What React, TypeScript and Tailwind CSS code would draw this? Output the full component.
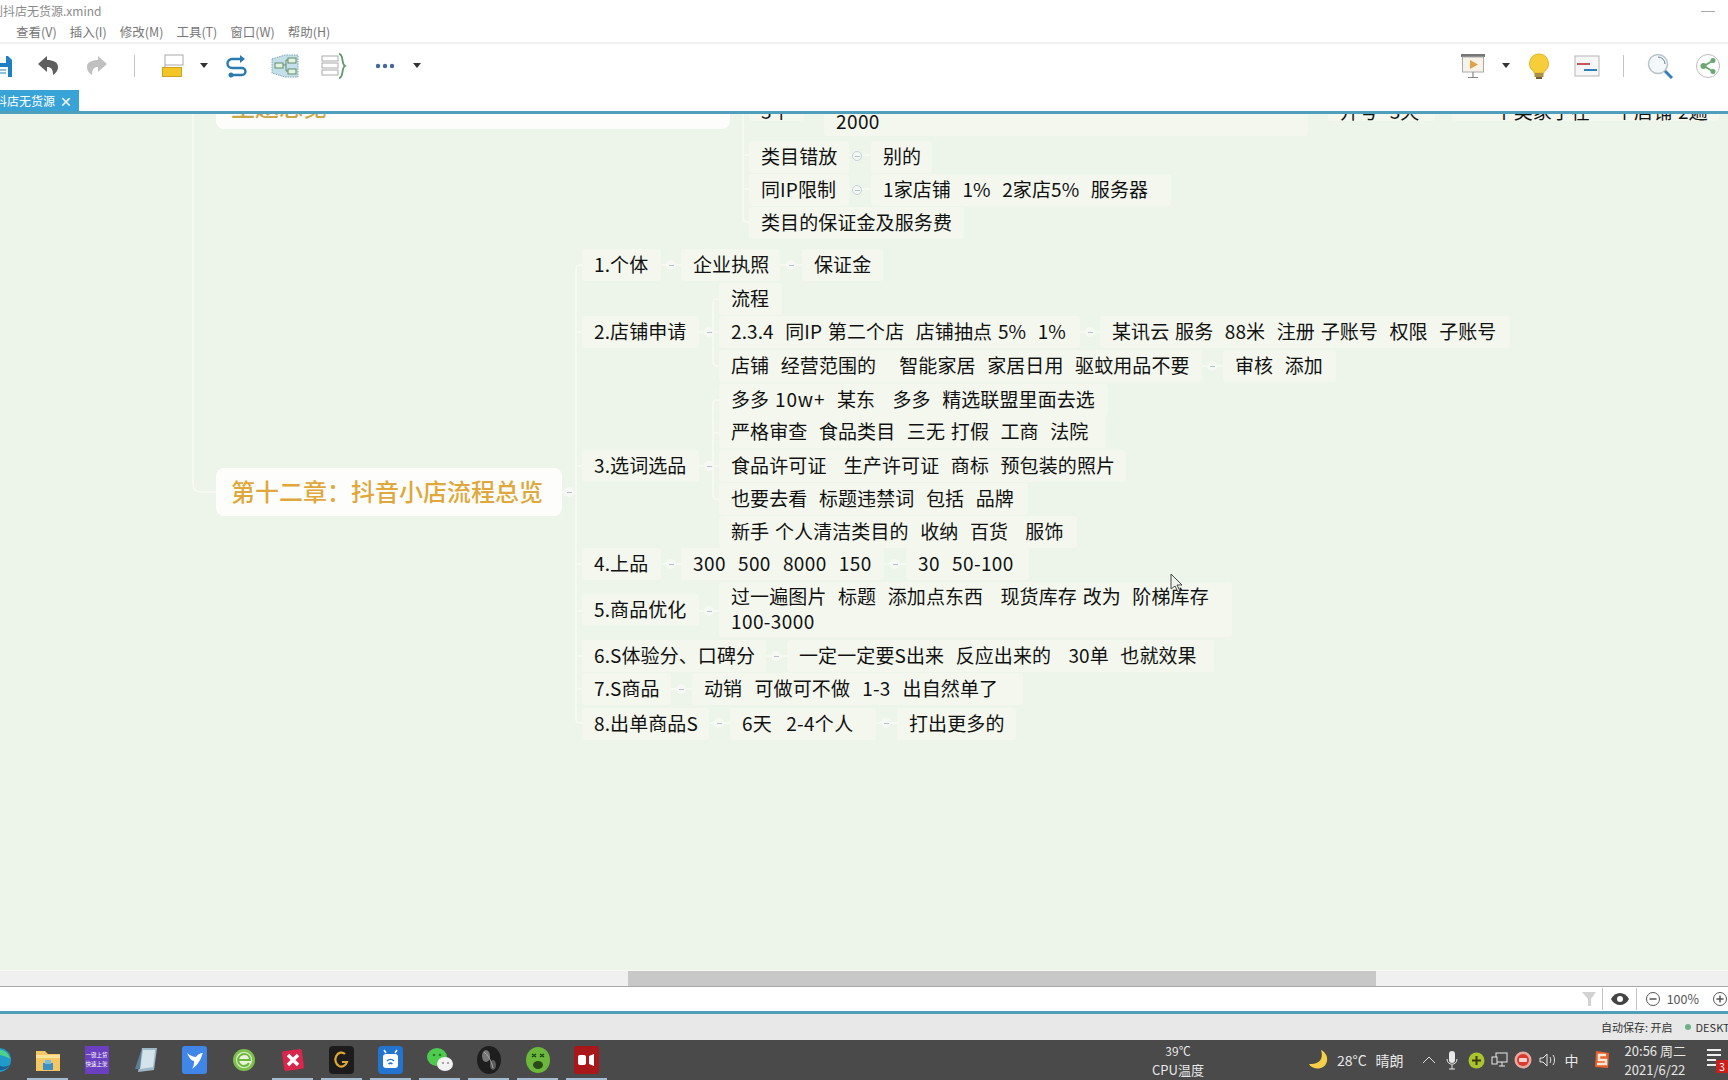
import React from "react";

const FONT = "font-['Noto_Sans_CJK_SC','Noto_Sans',sans-serif]";

function N({ c, children }: { c: string; children: React.ReactNode }) {
  return (
    <div className={"absolute flex items-center h-[32px] pl-[12px] pb-[3px] rounded-[3px] bg-[#f3f7ee] text-[19px] leading-[25px] text-[#111] whitespace-pre tracking-[0.1px] [word-spacing:1.4px] " + c}>
      {children}
    </div>
  );
}

function T({ c, ring = false }: { c: string; ring?: boolean }) {
  return (
    <div className={"absolute w-[10px] h-[10px] rounded-full bg-[#f6f9f3] flex items-center justify-center " + (ring ? "border border-[#c3d2dc] " : "") + c}>
      <div className="w-[5px] h-[1px] bg-[#b4c2cc] shrink-0" />
    </div>
  );
}

function Caret() {
  return <div className="w-0 h-0 border-l-[4px] border-r-[4px] border-t-[5px] border-l-transparent border-r-transparent border-t-[#333]" />;
}

function Sep({ c = "" }: { c?: string }) {
  return <div className={"w-[1px] h-[22px] bg-[#c4c4c4] " + c} />;
}

function Toolbar() {
  return (
    <div className="h-[48px] flex items-center border-t-2 border-[#f0f0f0] bg-white pr-[8px] pb-[3px]">
      <svg width="22" height="24" viewBox="0 0 22 24" className="-ml-[9px]">
        <path d="M1 2h16l4 4v17H1z" fill="#1c80c4" />
        <rect x="5" y="2" width="10" height="7" fill="#fff" />
        <rect x="5" y="13" width="12" height="10" fill="#fff" />
        <path d="M7 16h8M7 19h8" stroke="#1c80c4" />
      </svg>
      <svg width="24" height="24" viewBox="0 0 24 24" className="ml-[23px]">
        <path d="M11 2 2 10l9 8v-5c4 0 6 2 6 8 4-3 5-5 5-8 0-5-5-7-11-7z" fill="#5f5f5f" />
      </svg>
      <svg width="24" height="24" viewBox="0 0 24 24" className="ml-[25px]">
        <path d="M13 2l9 8-9 8v-5c-4 0-6 2-6 8-4-3-5-5-5-8 0-5 5-7 11-7z" fill="#c0c0c0" />
      </svg>
      <Sep c="ml-[25px]" />
      <svg width="24" height="24" viewBox="0 0 24 24" className="ml-[25px]">
        <rect x="5" y="1" width="18" height="10" fill="#fff" stroke="#aaa" />
        <rect x="2.5" y="13.5" width="19" height="9" fill="#f3c525" stroke="#c9a227" />
        <path d="M5 11v2" stroke="#aaa" />
      </svg>
      <div className="ml-[16px]"><Caret /></div>
      <svg width="24" height="24" viewBox="0 0 24 24" fill="none" className="ml-[17px]">
        <path d="M18 5H7a4.500 4.500 0 0 0 0 9h10a3.500 3.500 0 0 1 0 7H8" stroke="#2b7bb0" strokeWidth="2.400" />
        <path d="M15 1l5 4-5 4z" fill="#2b7bb0" />
        <circle cx="6" cy="21" r="2.500" fill="#2b7bb0" />
      </svg>
      <svg width="28" height="24" viewBox="0 0 28 24" className="ml-[22px]">
        <path d="M1 5 14 1h13v22H14L1 19z" fill="#c5dfea" stroke="#7aa3b8" strokeDasharray="1.500 1" />
        <rect x="4" y="9" width="8" height="5" fill="#e4f0e0" stroke="#5e8f6a" />
        <rect x="17" y="4" width="8" height="5" fill="#e4f0e0" stroke="#5e8f6a" />
        <rect x="17" y="15" width="8" height="5" fill="#e4f0e0" stroke="#5e8f6a" />
        <path d="M12 11h3V6h2M15 11v6h2" fill="none" stroke="#5e8f6a" />
      </svg>
      <svg width="26" height="26" viewBox="0 0 26 26" fill="none" className="ml-[22px]">
        <rect x="1" y="3" width="16" height="5" stroke="#aaa" />
        <rect x="1" y="10" width="16" height="5" stroke="#aaa" />
        <rect x="1" y="17" width="16" height="5" stroke="#aaa" />
        <path d="M18 1c5 0 2 10 6 12-4 2-1 12-6 12" stroke="#5c9a6a" strokeWidth="1.800" />
      </svg>
      <svg width="20" height="6" viewBox="0 0 20 6" className="ml-[28px]">
        <circle cx="3" cy="3" r="2.200" fill="#43699a" />
        <circle cx="10" cy="3" r="2.200" fill="#43699a" />
        <circle cx="17" cy="3" r="2.200" fill="#43699a" />
      </svg>
      <div className="ml-[18px]"><Caret /></div>

      <svg width="26" height="26" viewBox="0 0 26 26" className="ml-auto">
        <rect x="1" y="1" width="24" height="3" fill="#777" />
        <rect x="2.500" y="4" width="21" height="15" fill="#f8f3e8" stroke="#aaa" />
        <path d="M10 7l8 4.500-8 4.500z" fill="#dfa14a" />
        <path d="M13 19v5M8 24.500h10" stroke="#888" strokeWidth="1.200" />
      </svg>
      <div className="ml-[16px]"><Caret /></div>
      <svg width="22" height="26" viewBox="0 0 22 26" className="ml-[18px]">
        <path d="M11 1a9.500 9.500 0 0 0-5 17.500V20h10v-1.500A9.500 9.500 0 0 0 11 1z" fill="#f6cd3a" stroke="#e6b422" />
        <rect x="6.500" y="20" width="9" height="4" fill="#a98f4a" />
        <rect x="8" y="24" width="6" height="2" fill="#6f6030" />
      </svg>
      <svg width="26" height="22" viewBox="0 0 26 22" fill="none" className="ml-[24px]">
        <rect x="1" y="1" width="24" height="20" fill="#f7f7f7" stroke="#b5b5b5" />
        <path d="M3 9h13" stroke="#c2595a" strokeWidth="2" />
        <path d="M10 15h13" stroke="#2f7fb8" strokeWidth="2" />
      </svg>
      <Sep c="ml-[23px]" />
      <svg width="26" height="26" viewBox="0 0 26 26" fill="none" className="ml-[23px]">
        <circle cx="11" cy="11" r="9.500" fill="#f4f8fb" stroke="#b9c3cc" strokeWidth="1.500" />
        <path d="M11 4a7 7 0 0 1 7 7" stroke="#5f7fa0" />
        <path d="M18 18l7 7" stroke="#2f7fb8" strokeWidth="3" />
      </svg>
      <svg width="24" height="24" viewBox="0 0 24 24" fill="none" className="ml-[23px]">
        <circle cx="12" cy="12" r="11.500" fill="#fff" stroke="#bbb" />
        <path d="M17 6.500 8 12l9 5.500" stroke="#6aa86f" strokeWidth="1.800" />
        <circle cx="7.500" cy="12" r="3" fill="#6aa86f" />
        <circle cx="17" cy="6.500" r="2.500" fill="#6aa86f" />
        <circle cx="17" cy="17.500" r="2.500" fill="#6aa86f" />
      </svg>
    </div>
  );
}

function MindMap() {
  return (
    <div className="relative flex-1 overflow-hidden bg-[#edf4e9]">
      <svg width="1728" height="856" viewBox="0 0 1728 856" fill="none" stroke="#f7faf4" strokeWidth="1.500" className="absolute left-0 top-0">
        <path d="M193 0V370Q193 378 201 378H216" />
        <path d="M562 378H576" />
        <path d="M582 151H580Q576 151 576 155V605Q576 609 580 609H582" />
        <path d="M576 218H582M576 352H582M576 450H582M576 497H582M576 542H582M576 575H582" />
        <path d="M699 218H719M699 352H713M699 497H719M661 151H681M780 151H802M661 450H681M884 450H906M766 542H787M671 575H692M709 609H730M876 609H897M1080 218H1100M1202 252H1223" />
        <path d="M719 185H717Q713 185 713 189V248Q713 252 717 252H719" />
        <path d="M719 286H717Q713 286 713 290V381Q713 385 717 385H719M713 319H719M713 352H719" />
        <path d="M743 0V104Q743 108 747 108H749M743 41H749M743 75H749M849 41H871M849 75H871" />
      </svg>

      <div className={"absolute left-[216px] top-[-40px] w-[514px] h-[55px] rounded-[8px] bg-[#fdfefb] pl-[15px] pb-[8px] flex items-end text-[24px] leading-[30px] font-medium text-[#c9a64a] " + FONT}>主题总览</div>
      <div className={"absolute left-[216px] top-[354px] w-[346px] h-[48px] rounded-[8px] bg-[#fdfefb] pl-[15px] pb-[2px] flex items-center text-[24px] font-medium text-[#e0a73c] whitespace-pre " + FONT}>{"第十二章\uFF1A抖音小店流程总览"}</div>

      <div className={FONT}>
        <N c="left-[749px] top-[-15px] w-[55px] !h-[22px] !pb-0">3个</N>
        <N c="left-[824px] top-[-41px] w-[484px] !h-[63px] !items-end !pb-[3px] tracking-[0.4px]">2000</N>
        <N c="left-[1328px] top-[-15px] w-[107px] !h-[22px] !pb-0">开号  3天</N>
        <N c="left-[1452px] top-[-15px] w-[267px] !h-[22px] !pb-0">  一个类家手在 一个店铺 2遍</N>

        <N c="left-[749px] top-[27px] w-[100px]">类目错放</N>
        <N c="left-[871px] top-[27px] w-[61px]">别的</N>
        <N c="left-[749px] top-[60px] w-[100px]">同IP限制</N>
        <N c="left-[871px] top-[60px] w-[300px]">1家店铺  1%  2家店5%  服务器</N>
        <N c="left-[749px] top-[93px] w-[215px]">类目的保证金及服务费</N>

        <N c="left-[582px] top-[135px] w-[79px]">1.个体</N>
        <N c="left-[681px] top-[135px] w-[99px]">企业执照</N>
        <N c="left-[802px] top-[135px] w-[81px]">保证金</N>

        <N c="left-[719px] top-[169px] w-[63px]">流程</N>
        <N c="left-[582px] top-[202px] w-[117px]">2.店铺申请</N>
        <N c="left-[719px] top-[202px] w-[361px]">2.3.4  同IP 第二个店  店铺抽点 5%  1%</N>
        <N c="left-[1100px] top-[202px] w-[410px]">某讯云 服务  88米  注册 子账号  权限  子账号</N>
        <N c="left-[719px] top-[236px] w-[483px]">店铺  经营范围的    智能家居  家居日用  驱蚊用品不要</N>
        <N c="left-[1223px] top-[236px] w-[113px]">审核  添加</N>

        <N c="left-[719px] top-[270px] w-[389px]">
          <span>多多 <span className="tracking-[0.9px]">10w+</span>  某东   多多  精选联盟里面去选</span>
        </N>
        <N c="left-[719px] top-[302px] w-[387px]">严格审查  食品类目  三无 打假  工商  法院</N>
        <N c="left-[582px] top-[336px] w-[117px]">3.选词选品</N>
        <N c="left-[719px] top-[336px] w-[407px]">食品许可证   生产许可证  商标  预包装的照片</N>
        <N c="left-[719px] top-[369px] w-[309px]">也要去看  标题违禁词  包括  品牌</N>
        <N c="left-[719px] top-[402px] w-[358px]">新手 个人清洁类目的  收纳  百货   服饰</N>

        <N c="left-[582px] top-[434px] w-[79px]">4.上品</N>
        <N c="left-[681px] top-[434px] w-[203px] tracking-[0.4px]">300  500  8000  150</N>
        <N c="left-[906px] top-[434px] w-[123px] tracking-[0.4px]">30  50-100</N>

        <N c="left-[582px] top-[480px] w-[117px]">5.商品优化</N>
        <N c="left-[719px] top-[468px] w-[513px] !h-[55px]">
          <span>过一遍图片  标题  添加点东西   现货库存 改为  阶梯库存{"\n"}<span className="tracking-[0.4px]">100-3000</span></span>
        </N>

        <N c="left-[582px] top-[526px] w-[184px]">6.S体验分、口碑分</N>
        <N c="left-[787px] top-[526px] w-[427px]">一定一定要S出来  反应出来的   30单  也就效果</N>
        <N c="left-[582px] top-[559px] w-[89px]">7.S商品</N>
        <N c="left-[692px] top-[559px] w-[331px] [word-spacing:1.800px]">动销  可做可不做  1-3  出自然单了</N>
        <N c="left-[582px] top-[594px] w-[127px]">8.出单商品S</N>
        <N c="left-[730px] top-[594px] w-[146px] [word-spacing:2.500px] tracking-[0.3px]">6天  2-4个人</N>
        <N c="left-[897px] top-[594px] w-[119px]">打出更多的</N>
      </div>

      <T c="left-[564px] top-[373px]" />
      <T ring c="left-[852px] top-[37px]" />
      <T ring c="left-[852px] top-[71px]" />
      <T c="left-[666px] top-[146px]" />
      <T c="left-[786px] top-[146px]" />
      <T c="left-[704px] top-[213px]" />
      <T c="left-[1085px] top-[213px]" />
      <T c="left-[1207px] top-[247px]" />
      <T c="left-[704px] top-[347px]" />
      <T c="left-[666px] top-[445px]" />
      <T c="left-[890px] top-[445px]" />
      <T c="left-[704px] top-[492px]" />
      <T c="left-[771px] top-[537px]" />
      <T c="left-[676px] top-[570px]" />
      <T c="left-[714px] top-[604px]" />
      <T c="left-[881px] top-[604px]" />

      {/* mouse cursor */}
      <svg width="14" height="20" viewBox="0 0 14 20" className="absolute left-[1170px] top-[459px]">
        <path d="M1 1v15l4-3 3 6 2-1-3-6h5z" fill="#eef3ea" stroke="#444" />
      </svg>
    </div>
  );
}

function Slot({ children, line = false }: { children: React.ReactNode; line?: boolean }) {
  return (
    <div className="relative w-[49px] h-[40px] flex items-center justify-center shrink-0">
      {children}
      {line && <div className="absolute bottom-0 left-[4px] right-[4px] h-[2px] bg-[#a5bdd2]" />}
    </div>
  );
}

function Taskbar() {
  return (
    <div className="h-[40px] bg-[#4a4a4a] flex items-center text-[#e8e8e8] text-[13px] relative">
      <div className="flex items-center -ml-[26px]">
        <Slot>
          <svg width="26" height="26" viewBox="0 0 26 26">
            <circle cx="13" cy="13" r="12" fill="#1f9ac9" />
            <path d="M3 16c3 8 16 10 21 2-6 3-12 2-13-4-5-1-7 0-8 2z" fill="#1b5e94" />
            <path d="M6 6c5-6 16-4 18 6-4-3-10-4-18-6z" fill="#4fd08a" />
          </svg>
        </Slot>
        <Slot line>
          <svg width="26" height="24" viewBox="0 0 26 24">
            <path d="M1 3h9l3 3h12v17H1z" fill="#f3c864" />
            <rect x="1" y="7" width="24" height="3" fill="#fbe29a" />
            <path d="M8 22v-7h10v7z" fill="#3f8fc0" />
            <rect x="10" y="12" width="6" height="4" fill="#7dbbdc" />
          </svg>
        </Slot>
        <Slot>
          <div className="w-[24px] h-[28px] bg-[#6a3fc0] text-white text-[5.500px] leading-[9px] flex flex-col items-center justify-center whitespace-nowrap">
            <span>一键上货</span>
            <span>快速上架</span>
          </div>
        </Slot>
        <Slot>
          <svg width="24" height="26" viewBox="0 0 24 26">
            <path d="M8 1h15l-3 22-16 2z" fill="#9fb9c9" />
            <path d="M9 3h12l-2 17-13 2z" fill="#d4e4ec" />
            <path d="M1 22 8 1l-2 21z" fill="#5d7f93" />
          </svg>
        </Slot>
        <Slot>
          <svg width="25" height="28" viewBox="0 0 25 28">
            <rect width="25" height="28" rx="3" fill="#3f86e8" />
            <path d="M5 7c4 3 7 4 9 4 1-2 4-4 7-4-2 3-1 4-3 7-2 4-5 7-8 9 2-3 2-6 2-8-3 0-5-4-7-8z" fill="#fff" />
          </svg>
        </Slot>
        <Slot>
          <svg width="24" height="24" viewBox="0 0 24 24" fill="none">
            <circle cx="12" cy="12" r="11" fill="#7cc24a" />
            <circle cx="12" cy="12" r="8" fill="#e8f5d8" />
            <path d="M6 12h12c0-4-3-6-6-6s-6 3-6 6 3 6 6 6c2 0 4-1 5-3" stroke="#6cb63e" strokeWidth="2" />
          </svg>
        </Slot>
        <Slot line>
          <svg width="24" height="24" viewBox="0 0 24 24">
            <rect x="2" y="2" width="20" height="20" rx="2" fill="#d8264c" transform="rotate(-8 12 12)" />
            <path d="M7 7l10 10M17 7 7 17" stroke="#fff" strokeWidth="3.500" />
          </svg>
        </Slot>
        <Slot line>
          <svg width="25" height="28" viewBox="0 0 25 28" fill="none">
            <rect width="25" height="28" rx="4" fill="#1c1c1c" />
            <path d="M16 8a6 7 0 1 0 2 8h-5" stroke="#e0a92e" strokeWidth="2.200" />
          </svg>
        </Slot>
        <Slot line>
          <svg width="25" height="28" viewBox="0 0 25 28" fill="none">
            <rect width="25" height="28" rx="4" fill="#2274cf" />
            <rect x="5" y="8" width="15" height="14" rx="3" fill="#fff" />
            <path d="M8 7 6 4M17 7l2-3" stroke="#fff" strokeWidth="1.500" />
            <path d="M9 15a5 5 0 0 1 7 0M10.500 18a3 3 0 0 1 4 0" stroke="#2274cf" strokeWidth="1.500" />
          </svg>
        </Slot>
        <Slot line>
          <svg width="28" height="26" viewBox="0 0 28 26">
            <ellipse cx="11" cy="10" rx="10" ry="9" fill="#4ecb4e" />
            <ellipse cx="19" cy="17" rx="8" ry="7" fill="#f2f2f2" />
            <circle cx="8" cy="8" r="1.300" fill="#2a7a2a" />
            <circle cx="14" cy="8" r="1.300" fill="#2a7a2a" />
            <circle cx="17" cy="16" r="1" fill="#888" />
            <circle cx="22" cy="16" r="1" fill="#888" />
          </svg>
        </Slot>
        <Slot line>
          <svg width="26" height="28" viewBox="0 0 26 28">
            <ellipse cx="13" cy="14" rx="12" ry="14" fill="#1e1e1e" />
            <ellipse cx="10" cy="10" rx="4" ry="6" fill="#777" />
            <ellipse cx="17" cy="19" rx="3" ry="5" fill="#5a5a5a" />
            <path d="M8 6c4 3 7 8 9 16" stroke="#aaa" strokeWidth="1" fill="none" />
          </svg>
        </Slot>
        <Slot line>
          <svg width="26" height="28" viewBox="0 0 26 28">
            <ellipse cx="13" cy="14" rx="12" ry="13" fill="#6cb83c" />
            <path d="M7 8l4 3M11 8l-4 3M15 8l4 3M19 8l-4 3" stroke="#1f4010" strokeWidth="1.500" />
            <ellipse cx="13" cy="19" rx="5" ry="4" fill="#2a4a1a" />
          </svg>
        </Slot>
        <Slot line>
          <svg width="25" height="28" viewBox="0 0 25 28">
            <rect width="25" height="28" rx="3" fill="#a81818" />
            <rect x="4" y="9" width="8" height="10" rx="2" fill="#fff" />
            <path d="M15 10l5-2v12l-5-2z" fill="#fff" />
          </svg>
        </Slot>
      </div>

      <div className="ml-auto flex items-center">
        <div className="flex flex-col items-center leading-[19px] mr-[104px]">
          <span className="text-[12px]">39℃</span>
          <span>CPU温度</span>
        </div>
        <svg width="20" height="22" viewBox="0 0 20 22" className="mr-[9px]">
          <path d="M13 1c3 9-2 15-12 14 3 6 16 7 18-3 1-5-2-9-6-11z" fill="#f5cf45" />
        </svg>
        <span className="mr-[9px] text-[14px]">28°C</span>
        <span className="mr-[18px] text-[14px]">晴朗</span>
        <svg width="14" height="8" viewBox="0 0 14 8" fill="none" className="mr-[10px]">
          <path d="M1 7l6-6 6 6" stroke="#ddd" />
        </svg>
        <svg width="12" height="20" viewBox="0 0 12 20" fill="none" className="mr-[10px]">
          <rect x="3" y="1" width="6" height="12" rx="3" fill="#e8e8e8" />
          <path d="M1 9c0 7 10 7 10 0M6 15v4M3 19h6" stroke="#e8e8e8" />
        </svg>
        <svg width="17" height="17" viewBox="0 0 17 17" className="mr-[6px]">
          <circle cx="8.500" cy="8.500" r="8" fill="#a9c42c" />
          <path d="M8.500 4v9M4 8.500h9" stroke="#3b3b12" strokeWidth="2" />
        </svg>
        <svg width="17" height="16" viewBox="0 0 17 16" fill="none" stroke="#e8e8e8" className="mr-[6px]">
          <rect x="5" y="1" width="11" height="9" />
          <rect x="1" y="5" width="5" height="7" fill="#4a4a4a" />
          <path d="M8 14h6M11 10v4" />
        </svg>
        <svg width="18" height="18" viewBox="0 0 18 18" className="mr-[7px]">
          <circle cx="9" cy="9" r="8.500" fill="#e8a9a0" />
          <circle cx="9" cy="9" r="6" fill="#d83a30" />
          <rect x="5" y="7" width="8" height="4" rx="1" fill="#f4d4d0" />
        </svg>
        <svg width="18" height="16" viewBox="0 0 18 16" fill="none" stroke="#e8e8e8" className="mr-[8px]">
          <path d="M1 6v4h3l4 4V2L4 6z" />
          <path d="M11 5c1 2 1 4 0 6M14 3c2 3 2 7 0 10" />
        </svg>
        <span className="mr-[14px] text-[14px]">中</span>
        <svg width="18" height="20" viewBox="0 0 18 20" className="mr-[14px]">
          <path d="M3 1l13 2-1 15-13-1z" fill="#e8602a" />
          <path d="M13 5H6v5h7v4H4" fill="none" stroke="#f8e8d8" strokeWidth="2.500" />
        </svg>
        <div className="flex flex-col leading-[19px] whitespace-pre mr-[20px]">
          <span>20:56 周二</span>
          <span>2021/6/22</span>
        </div>
        <div className="relative w-[22px] h-[26px]">
          <svg width="16" height="18" viewBox="0 0 16 18" fill="none" stroke="#eee" strokeWidth="2" className="absolute left-0 top-[2px]">
            <path d="M1 1h14M1 6h14M1 11h9M1 16h9" />
          </svg>
          <div className="absolute right-0 bottom-0 w-[12px] h-[13px] bg-[#c8201c] text-white text-[10px] leading-[13px] text-center">3</div>
        </div>
      </div>
    </div>
  );
}

export default function App() {
  return (
    <div className={"w-[1728px] h-[1080px] overflow-hidden flex flex-col bg-white " + FONT}>
      <div className="h-[22px] shrink-0 flex items-center justify-between text-[12px] text-[#8c8c8c]">
        <span className="-ml-[9px]">创抖店无货源.xmind</span>
        <div className="w-[14px] h-[1px] bg-[#aaa] mr-[13px]" />
      </div>
      <div className="h-[20px] shrink-0 flex items-center text-[12.500px] text-[#777] pl-[16px] gap-[13px]">
        <span>查看(V)</span>
        <span>插入(I)</span>
        <span>修改(M)</span>
        <span>工具(T)</span>
        <span>窗口(W)</span>
        <span>帮助(H)</span>
      </div>
      <Toolbar />
      <div className="h-[21px] shrink-0 flex bg-white">
        <div className="w-[79px] bg-[#38a3d6] text-white text-[12px] flex items-center justify-end pr-[7px] gap-[5px] overflow-hidden whitespace-pre">
          <span>抖店无货源</span>
          <span className="text-[14px] leading-none">✕</span>
        </div>
      </div>
      <div className="h-[3px] shrink-0 bg-[#4f9fba]" />
      <MindMap />
      <div className="h-[16px] shrink-0 bg-[#f0f0f0] flex border-t border-[#f8f8f8]">
        <div className="ml-[628px] w-[748px] bg-[#c8c8c8]" />
      </div>
      <div className="h-[1px] shrink-0 bg-[#a8a8a8]" />
      <div className="h-[24px] shrink-0 bg-white flex items-center justify-end text-[13px] text-[#555] pr-[1px]">
        <svg width="16" height="18" viewBox="0 0 16 18" className="mr-[5px]">
          <path d="M1 2h14l-5 7v7H7V9z" fill="#d2d2d2" />
        </svg>
        <Sep c="mr-[8px]" />
        <svg width="18" height="12" viewBox="0 0 18 12" className="mr-[7px]">
          <path d="M0 6c4-8 14-8 18 0-4 8-14 8-18 0z" fill="#444" />
          <circle cx="9" cy="6" r="3" fill="#fff" />
        </svg>
        <Sep c="mr-[9px]" />
        <svg width="14" height="14" viewBox="0 0 14 14" fill="none" stroke="#555" className="mr-[7px]">
          <circle cx="7" cy="7" r="6.500" />
          <path d="M3.500 7h7" strokeWidth="1.500" />
        </svg>
        <span className="mr-[14px] text-[12.500px]">100%</span>
        <svg width="14" height="14" viewBox="0 0 14 14" fill="none" stroke="#555">
          <circle cx="7" cy="7" r="6.500" />
          <path d="M3.500 7h7M7 3.500v7" strokeWidth="1.500" />
        </svg>
      </div>
      <div className="h-[3px] shrink-0 bg-[#4f9fba]" />
      <div className="h-[26px] shrink-0 bg-[#e8e8e8] flex items-center text-[11px] text-[#333] pl-[1601px] whitespace-pre">
        <span>自动保存: 开启</span>
        <div className="w-[6px] h-[6px] rounded-full bg-[#6fb08a] ml-[12px] mr-[5px] shrink-0" />
        <span>DESKTOP</span>
      </div>
      <Taskbar />
    </div>
  );
}
